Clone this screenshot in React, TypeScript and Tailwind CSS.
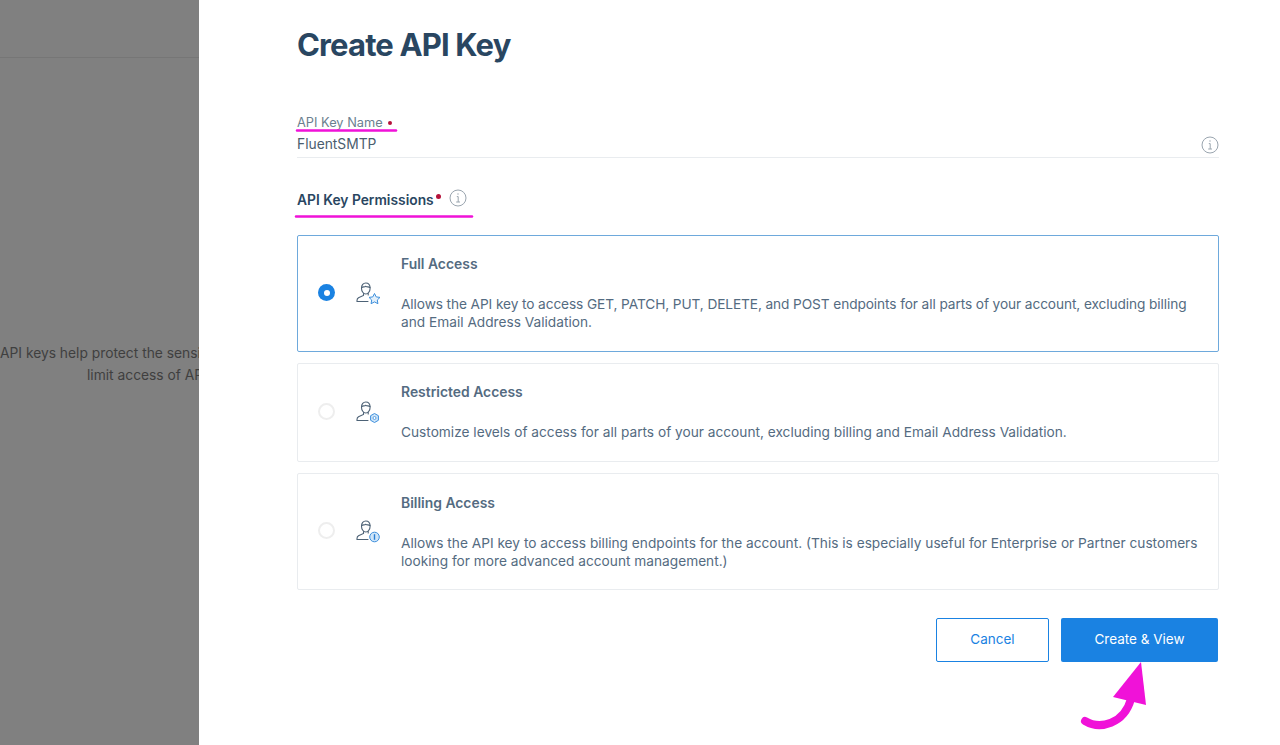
import type { ReactNode } from 'react';

type Badge = 'star' | 'gear' | 'dollar';

type Access = {
    title: string;
    lines: string[];
    badge: Badge;
    selected?: boolean;
    height: string;
    textTop: string;
};

const accessOptions: Access[] = [
    {
        title: 'Full Access',
        lines: [
            'Allows the API key to access GET, PATCH, PUT, DELETE, and POST endpoints for all parts of your account, excluding billing',
            'and Email Address Validation.',
        ],
        badge: 'star',
        selected: true,
        height: 'h-[117px]',
        textTop: 'pt-[18px]',
    },
    {
        title: 'Restricted Access',
        lines: [
            'Customize levels of access for all parts of your account, excluding billing and Email Address Validation.',
        ],
        badge: 'gear',
        height: 'h-[99px]',
        textTop: 'pt-[18px]',
    },
    {
        title: 'Billing Access',
        lines: [
            'Allows the API key to access billing endpoints for the account. (This is especially useful for Enterprise or Partner customers',
            'looking for more advanced account management.)',
        ],
        badge: 'dollar',
        height: 'h-[117px]',
        textTop: 'pt-[19px]',
    },
];

function InfoIcon() {
    return (
        <svg width="18" height="18" viewBox="0 0 18 18" fill="none" stroke="#9aa5af" strokeWidth="1">
            <circle cx="9" cy="9" r="8" />
            <circle cx="9" cy="5" r="0.7" fill="#9aa5af" stroke="none" />
            <path d="M7.8 7.6H9.2V13M7.2 13H11" />
        </svg>
    );
}

function BadgeMark({ badge }: { badge: Badge }) {
    if (badge === 'star') {
        return (
            <path
                d="M18.5 11.5l1.7 3.4 3.8.5-2.7 2.6.6 3.7-3.4-1.8-3.4 1.8.6-3.7-2.7-2.6 3.8-.5z"
                fill="#e3f0fb"
                stroke="#3d8fdc"
                strokeWidth="1"
            />
        );
    }
    if (badge === 'gear') {
        return (
            <g>
                <path
                    d="M18.5 12.500l3.900 2.200v4.600l-3.900 2.200-3.900-2.200v-4.600z"
                    fill="#cfe5f8"
                    stroke="#3d8fdc"
                    strokeWidth="1"
                />
                <circle cx="18.5" cy="17" r="1.5" fill="#fff" stroke="#3d8fdc" strokeWidth="0.8" />
            </g>
        );
    }
    return (
        <g>
            <circle cx="18.5" cy="17" r="4.8" fill="#cfe5f8" stroke="#3d8fdc" strokeWidth="1" />
            <path d="M18.5 14.200v5.600" stroke="#2a7fd4" strokeWidth="1.4" />
        </g>
    );
}

function PersonIcon({ badge }: { badge: Badge }) {
    return (
        <svg width="24" height="24" viewBox="0 0 24 24" fill="none">
            <g stroke="#4d6276" strokeWidth="1.1" strokeLinecap="round">
                <path d="M5.5 6.2C5.5 3 7.3 1 9.8 1s4.3 2 4.3 5.2c0 3-1.9 5.8-4.3 5.8S5.5 9.200 5.500 6.200z" />
                <path d="M5.700 5.500C7 4.200 8.500 5.400 9.800 4.300c1.300 1.100 2.900 0 4.200 1.200" />
                <path d="M7.500 11.500v2L2.500 15.800C1.500 16.400 1 17.300 1 18.600v.9h11" />
                <path d="M12.200 11.500v1.500" />
            </g>
            <BadgeMark badge={badge} />
        </svg>
    );
}

function Radio({ selected }: { selected?: boolean }) {
    if (selected) {
        return (
            <div className="flex h-[17px] w-[17px] items-center justify-center rounded-full bg-[#1a82e2]">
                <div className="h-[6px] w-[6px] rounded-full bg-white" />
            </div>
        );
    }
    return <div className="h-[17px] w-[17px] rounded-full border-2 border-[#eeeeee]" />;
}

function AccessCard({ option }: { option: Access }) {
    return (
        <div
            className={`flex rounded-[2px] border ${option.height} ${
                option.selected ? 'border-[#6ea9dc]' : 'border-[#e9ecef]'
            }`}
        >
            <div className="flex w-[103px] shrink-0 items-center pb-[2px] pl-[20px]">
                <Radio selected={option.selected} />
                <div className="mt-[2px] ml-[21px]">
                    <PersonIcon badge={option.badge} />
                </div>
            </div>
            <div className={option.textTop}>
                <div className="text-[13.900px] leading-[20px] font-semibold text-[#546b81]">
                    {option.title}
                </div>
                <div className="mt-[22px] text-[13.700px] leading-[17.500px] whitespace-nowrap text-[#546b81]">
                    {option.lines.map((line, index) => (
                        <div
                            key={line}
                            className={option.selected && index === 0 ? 'tracking-[-0.1px]' : ''}
                        >
                            {line}
                        </div>
                    ))}
                </div>
            </div>
        </div>
    );
}

function Overlay({ children }: { children: ReactNode }) {
    return <div className="pointer-events-none absolute inset-0">{children}</div>;
}

export default function App() {
    return (
        <div className="relative flex h-[745px] w-[1280px] overflow-hidden bg-white font-['Inter',sans-serif]">
            <div className="w-[199px] shrink-0 overflow-hidden bg-[#808080] text-[13.800px] whitespace-nowrap text-[#3f3f3f]">
                <div className="h-[58px] border-b border-[#767676]" />
                <div className="mt-[284px] leading-[22px]">
                    <div>API keys help protect the sensitive data</div>
                    <div className="pl-[87px]">limit access of API</div>
                </div>
            </div>

            <div className="flex-1 pr-[61px] pl-[98px]">
                <h1 className="mt-[24px] text-[31px] leading-[42px] font-bold tracking-[-0.85px] text-[#294661]">
                    Create API Key
                </h1>

                <div className="mt-[49px] h-[43px] border-b border-[#e9ecef]">
                    <div className="flex items-center text-[12.800px] leading-[16px] text-[#6b7f90]">
                        API Key Name
                        <span className="ml-[5px] h-[4px] w-[4px] rounded-full bg-[#b5123a]" />
                    </div>
                    <div className="mt-[3px] flex items-center justify-between">
                        <span className="text-[13.800px] leading-[20px] text-[#4a5d6e]">FluentSMTP</span>
                        <span className="mt-[2px]">
                            <InfoIcon />
                        </span>
                    </div>
                </div>

                <div className="mt-[32px] flex h-[20px] items-center">
                    <span className="text-[13.800px] font-semibold text-[#294661]">API Key Permissions</span>
                    <span className="mb-[8px] ml-[2px] h-[5px] w-[5px] rounded-full bg-[#b5123a]" />
                    <span className="mb-[4px] ml-[8px]">
                        <InfoIcon />
                    </span>
                </div>

                <div className="mt-[25px] flex flex-col gap-[11px]">
                    {accessOptions.map((option) => (
                        <AccessCard key={option.title} option={option} />
                    ))}
                </div>

                <div className="mt-[28px] flex justify-end gap-[12px] pr-[1px]">
                    <button className="h-[44px] w-[113px] rounded-[2px] border border-[#1a82e2] bg-white pb-[2px] text-[13.500px] text-[#1a82e2]">
                        Cancel
                    </button>
                    <button className="h-[44px] w-[157px] rounded-[2px] bg-[#1a82e2] pb-[2px] text-[13.500px] text-white">
                        Create &amp; View
                    </button>
                </div>
            </div>

            <Overlay>
                <svg width="1280" height="745" viewBox="0 0 1280 745" fill="none">
                    <g stroke="#f012d8" strokeLinecap="round">
                        <path d="M297 130.500H396" strokeWidth="2.500" />
                        <path d="M296 216.500H472" strokeWidth="2.500" />
                        <path d="M1085 721C1100 730 1124 724 1131 699" strokeWidth="8" />
                    </g>
                    <path d="M1141 662L1113 697L1146 705Z" fill="#f012d8" />
                </svg>
            </Overlay>
        </div>
    );
}
